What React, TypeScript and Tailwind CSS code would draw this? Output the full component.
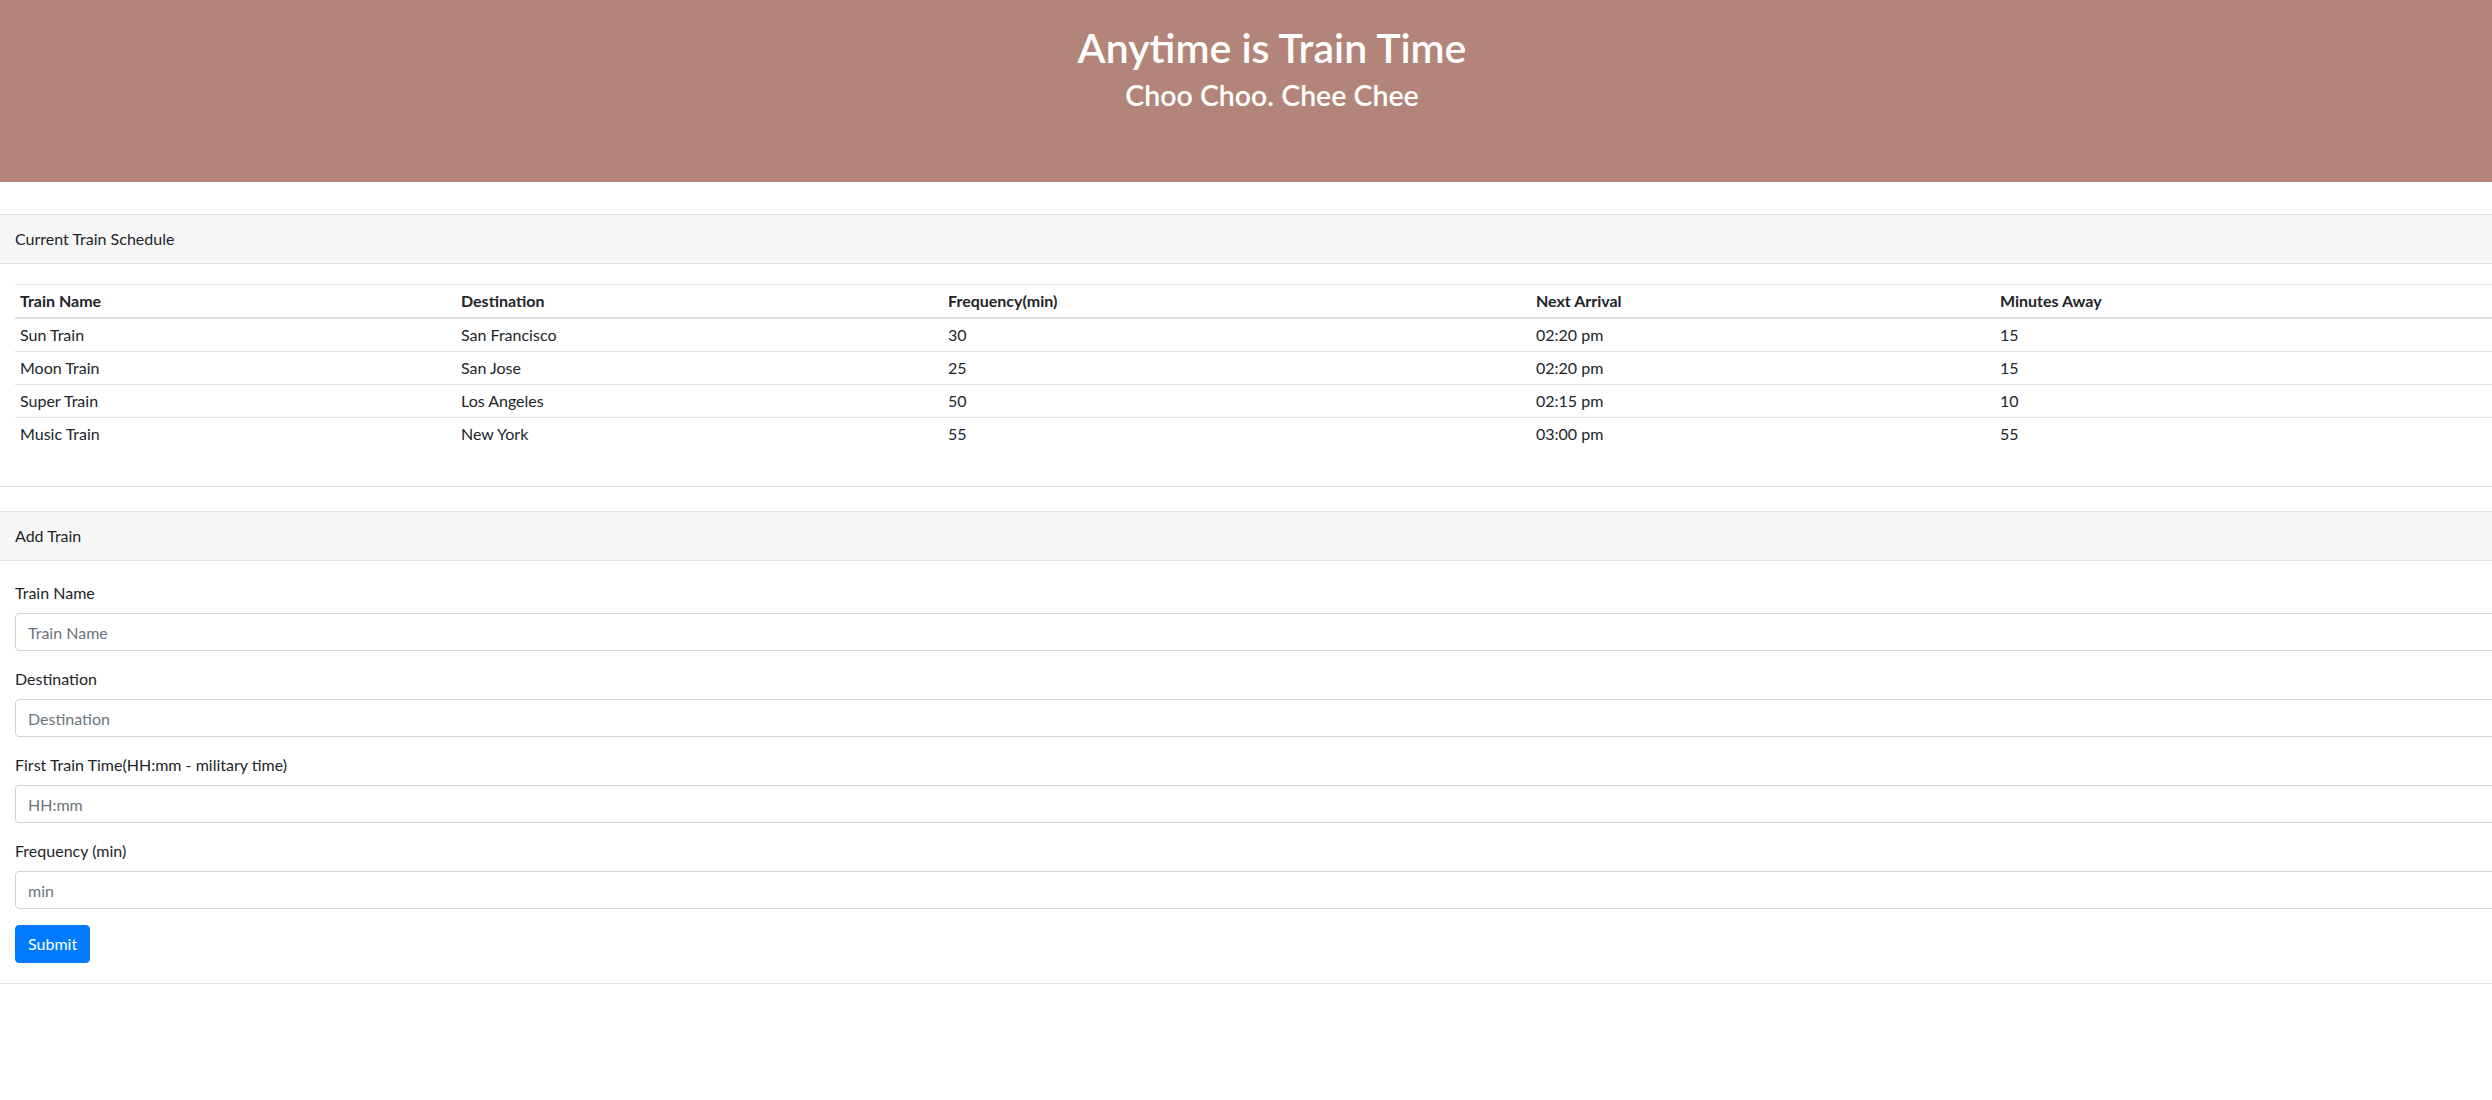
import React from "react";

const rows = [
  ["Sun Train", "San Francisco", "30", "02:20 pm", "15"],
  ["Moon Train", "San Jose", "25", "02:20 pm", "15"],
  ["Super Train", "Los Angeles", "50", "02:15 pm", "10"],
  ["Music Train", "New York", "55", "03:00 pm", "55"],
];

const fields = [
  ["Train Name", "Train Name"],
  ["Destination", "Destination"],
  ["First Train Time(HH:mm - military time)", "HH:mm"],
  ["Frequency (min)", "min"],
];

export default function App() {
  return (
    <div
      className="w-full min-h-[1100px] overflow-hidden bg-white text-[#212529] text-[16px] leading-6"
      style={{ fontFamily: 'Lato, "Open Sans", sans-serif' }}
    >
      <header className="h-[182px] bg-[#b3857a] text-white text-center pl-[52px] pt-[23px]">
        <h1 className="text-[41px] leading-[1.2] font-semibold">Anytime is Train Time</h1>
        <h3 className="text-[28.5px] leading-[1.2] font-semibold mt-[6px]">Choo Choo. Chee Chee</h3>
      </header>

      <section className="mt-8 ml-[-6px] mr-[-60px] border border-[#dfdfdf]">
        <div className="bg-[#f7f7f7] border-b border-[#dfdfdf] px-5 py-3">Current Train Schedule</div>
        <div className="p-5">
          <table className="w-full border-collapse mb-4 text-left">
            <thead>
              <tr>
                <th className="w-[441px] border-t border-b-2 border-[#dee2e6] px-[5px] py-[4px] font-bold">Train Name</th>
                <th className="w-[487px] border-t border-b-2 border-[#dee2e6] px-[5px] py-[4px] font-bold">Destination</th>
                <th className="w-[588px] border-t border-b-2 border-[#dee2e6] px-[5px] py-[4px] font-bold">Frequency(min)</th>
                <th className="w-[464px] border-t border-b-2 border-[#dee2e6] px-[5px] py-[4px] font-bold">Next Arrival</th>
                <th className="border-t border-b-2 border-[#dee2e6] px-[5px] py-[4px] font-bold">Minutes Away</th>
              </tr>
            </thead>
            <tbody>
              {rows.map((r, i) => (
                <tr key={i}>
                  {r.map((c, j) => (
                    <td key={j} className={`${i === 0 ? "" : "border-t"} border-[#dee2e6] px-[5px] py-[4px]`}>
                      {c}
                    </td>
                  ))}
                </tr>
              ))}
            </tbody>
          </table>
        </div>
      </section>

      <section className="mt-6 ml-[-6px] mr-[-60px] border border-[#dfdfdf]">
        <div className="bg-[#f7f7f7] border-b border-[#dfdfdf] px-5 py-3">Add Train</div>
        <form className="p-5" onSubmit={(e) => e.preventDefault()}>
          {fields.map(([label, ph]) => (
            <div key={label} className="mb-4">
              <label className="block mb-2">{label}</label>
              <input
                placeholder={ph}
                className="block w-full h-[38px] px-3 border border-[#ced4da] rounded-[4px] text-[16px] text-[#495057] placeholder:text-[#6c757d] outline-none"
              />
            </div>
          ))}
          <button type="submit" className="h-[38px] px-3 bg-[#007bff] text-white rounded-[4px] border border-[#007bff]">
            Submit
          </button>
        </form>
      </section>
    </div>
  );
}
